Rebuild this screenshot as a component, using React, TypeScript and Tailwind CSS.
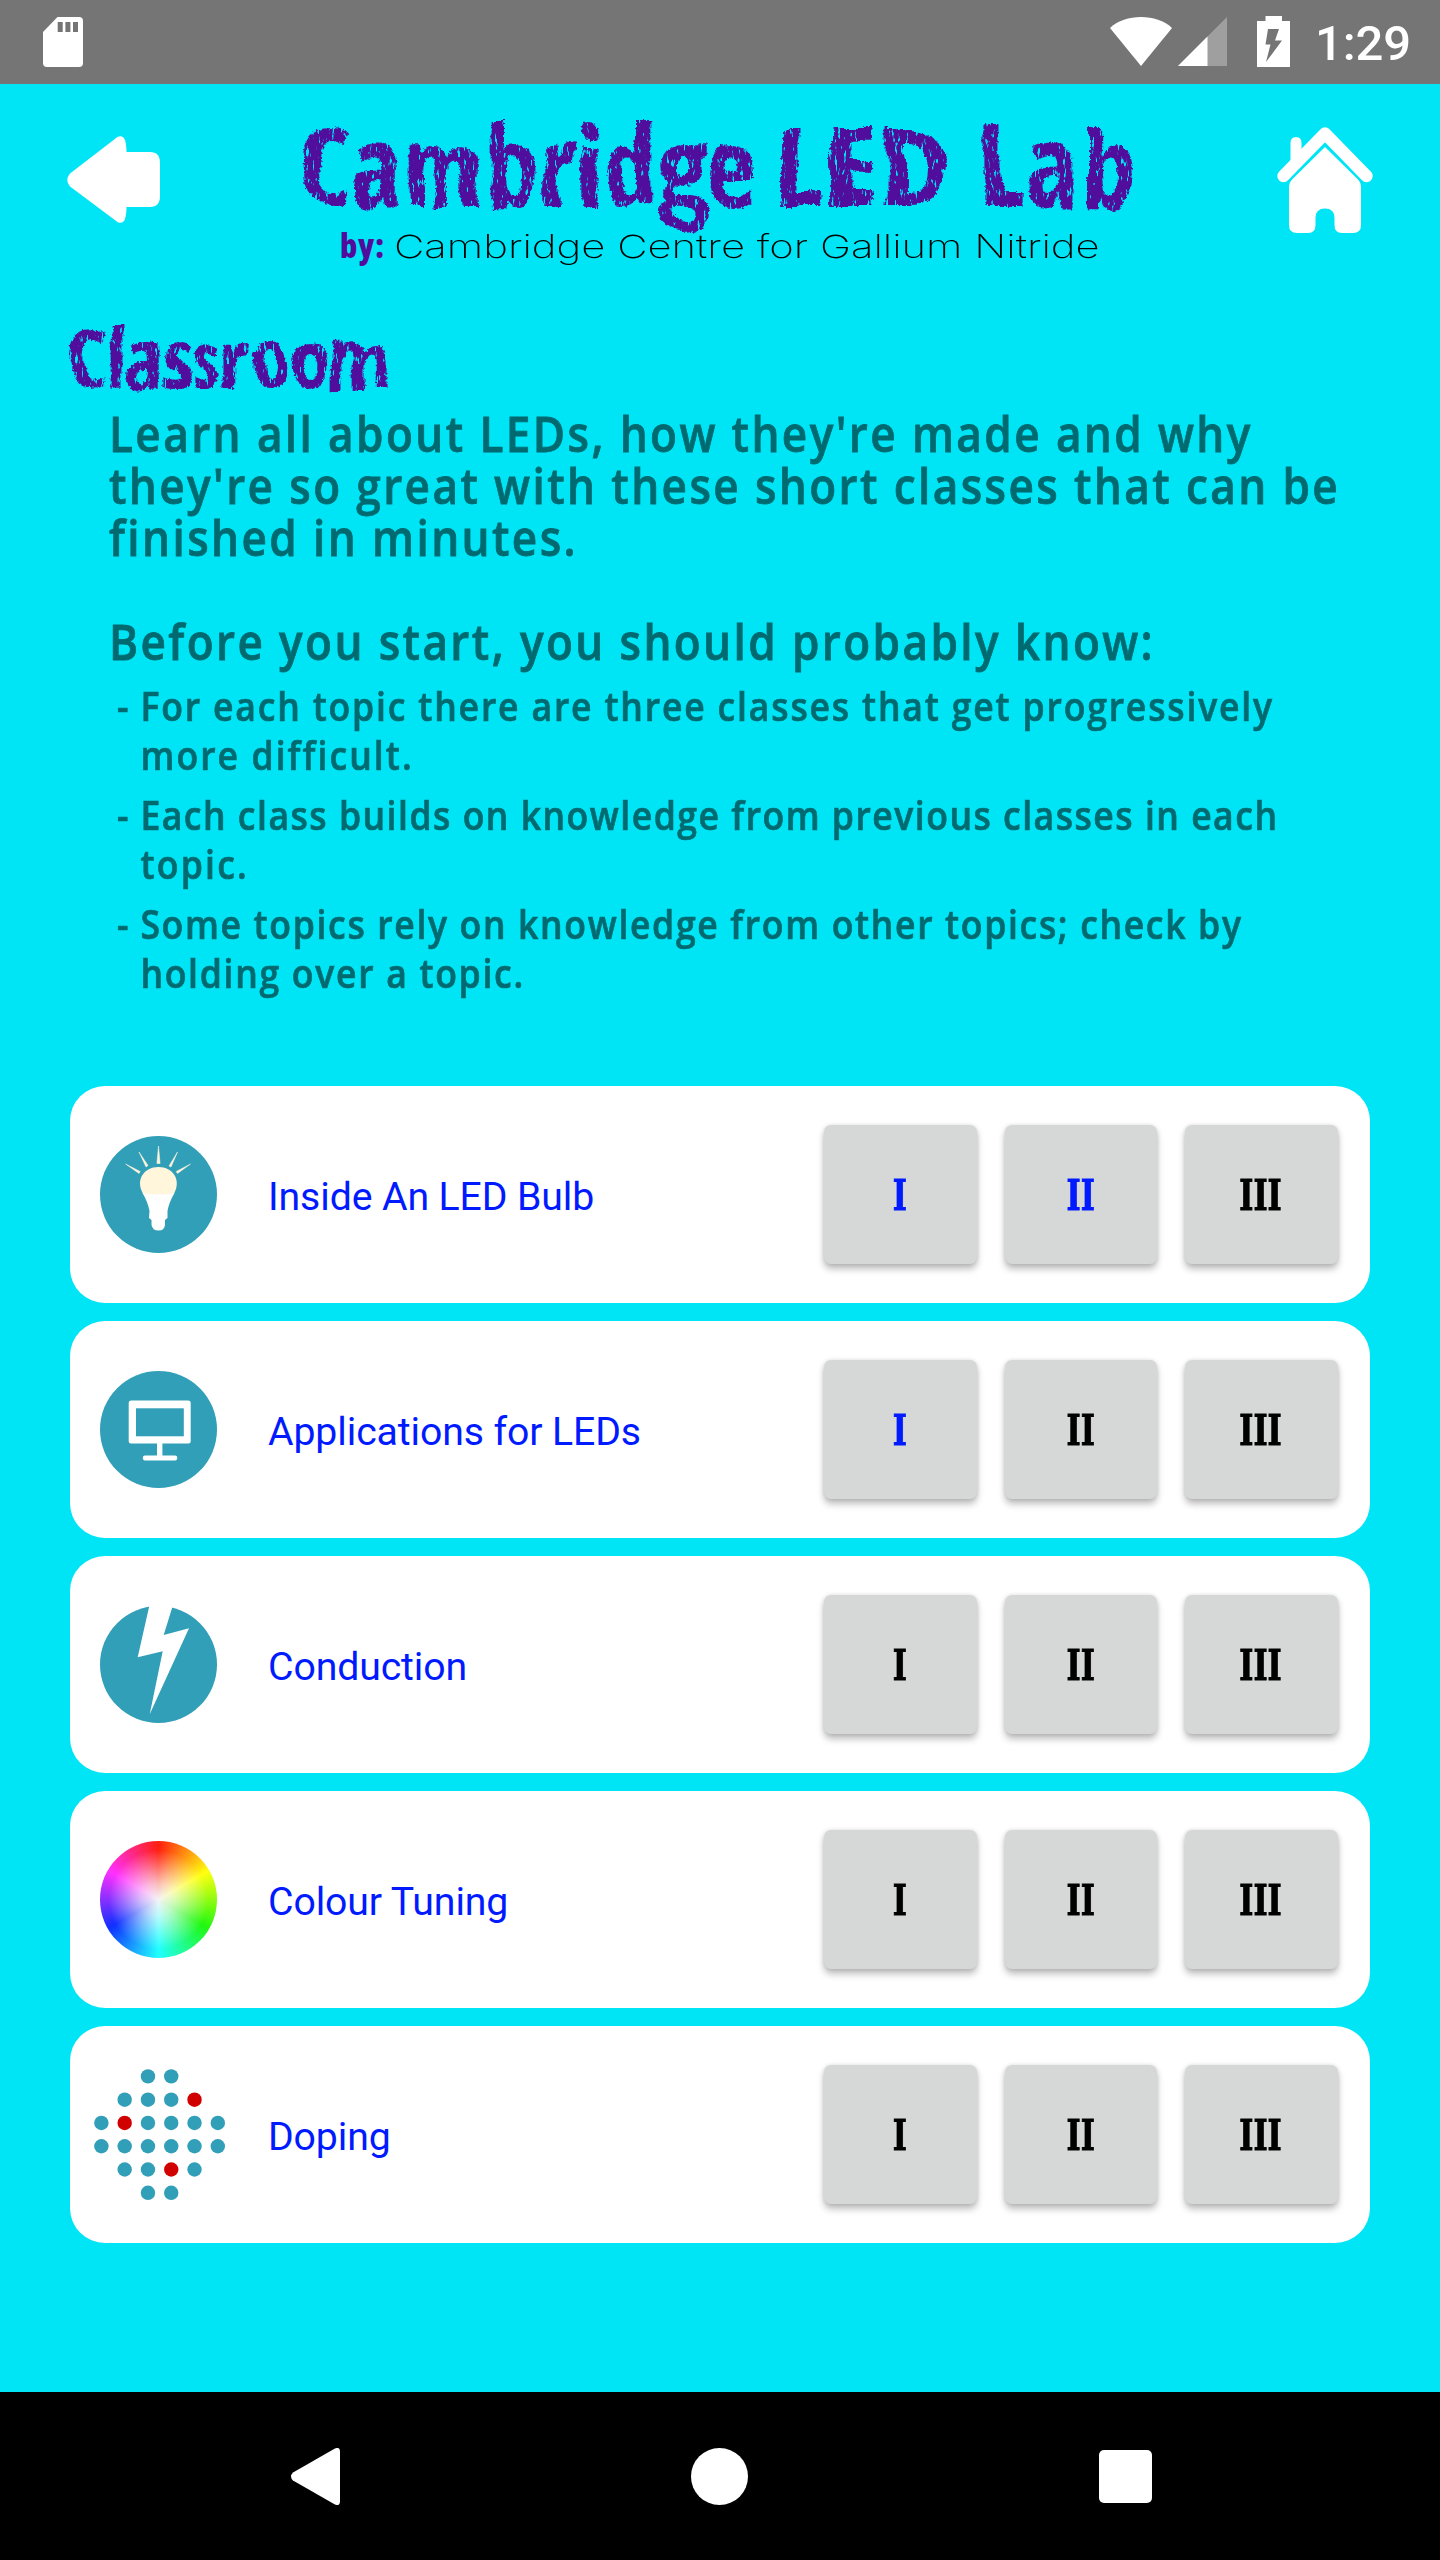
import React from "react";

const TEAL = "#319fb7";

/* ---------- status bar ---------- */

function StatusBar() {
  return (
    <div className="flex h-[84px] shrink-0 items-start bg-[#757575] pl-[43px] pr-[29px]">
      <svg className="mt-[17px] h-[50px] w-[40px]" viewBox="0 0 40 50">
        <path d="M14.5 0H36a4 4 0 0 1 4 4v42a4 4 0 0 1-4 4H4a4 4 0 0 1-4-4V15Z" fill="#fff" />
        <path d="M14.7 5h5v10h-5zM22.4 5h5v10h-5zM30 5h5v10h-5z" fill="#757575" />
      </svg>
      <svg className="ml-auto mt-[17px] h-[49px] w-[62px]" viewBox="0 0 62 49">
        <path d="M31 49 0 11C8 3.500 19 0 31 0s23 3.500 31 11Z" fill="#fff" />
      </svg>
      <svg className="ml-[6px] mt-[17px] h-[49px] w-[49px]" viewBox="0 0 49 49">
        <path d="M0 49 49 0v49Z" fill="#9f9f9f" />
        <path d="M0 49 29.500 19.500V49Z" fill="#fff" />
      </svg>
      <svg className="ml-[30px] mt-[16px] h-[51px] w-[33px]" viewBox="0 0 33 51">
        <path d="M8.500 0h16.500v5h8v46H0V5h8.500Z" fill="#fff" />
        <path d="M11 13h11l-4 11.500h7L9 46l4.500-17.500H8.500Z" fill="#757575" />
      </svg>
      <span className="ml-[25px] mt-[14px] w-[96px] whitespace-nowrap font-[Roboto] text-[49px] font-medium leading-[60px] tracking-[-0.100px] text-white">
        1:29
      </span>
    </div>
  );
}

/* ---------- header ---------- */

function BrushFilter() {
  return (
    <svg className="absolute h-0 w-0" aria-hidden="true">
      <filter id="brush" x="-5%" y="-5%" width="110%" height="110%">
        <feTurbulence type="fractalNoise" baseFrequency="0.022" numOctaves="2" seed="4" result="wobble" />
        <feDisplacementMap in="SourceGraphic" in2="wobble" scale="16" xChannelSelector="R" yChannelSelector="G" result="bent" />
        <feTurbulence type="fractalNoise" baseFrequency="0.4" numOctaves="1" seed="2" result="fine" />
        <feDisplacementMap in="bent" in2="fine" scale="4" xChannelSelector="R" yChannelSelector="G" result="rough" />
        <feTurbulence type="fractalNoise" baseFrequency="0.35 0.1" numOctaves="3" seed="9" result="grain" />
        <feColorMatrix in="grain" type="matrix" values="0 0 0 0 0  0 0 0 0 0  0 0 0 0 0  0 0 0 -10 7.400" result="mask" />
        <feComposite in="rough" in2="mask" operator="in" />
      </filter>
    </svg>
  );
}

function Header() {
  return (
    <header className="flex h-[231px] shrink-0 items-start pl-[67px] pr-[67px]">
      <svg className="mt-[52px] h-[88px] w-[93px]" viewBox="0 0 93 88">
        <path
          d="M48.500 2.500C52-1 56.500-.5 58 4c1 3.500 1.500 7.500 1.500 12H83q10 0 10 11v33q0 11-10 11H59.500c0 4.500-.5 8.500-1.500 12-1.500 4.500-6 5-9.500 1.500L3 50.500q-5.500-6.500 0-13Z"
          fill="#fff"
        />
      </svg>
      <div className="ml-[138px] mt-[24px] w-[850px]">
        <h1 className="flex whitespace-nowrap font-['Open_Sans'] text-[110px] font-bold leading-[110px] text-[#510c9c] font-stretch-75% [filter:url(#brush)]">
          <span className="w-[474px] shrink-0 tracking-[-0.300px]">Cambridge</span>
          <span className="w-[205px] shrink-0 origin-left scale-x-[1.15] tracking-[0.500px]">LED</span>
          <span className="origin-left scale-x-[1.06] tracking-[0.500px]">Lab</span>
        </h1>
        <div className="mt-[8px] flex items-baseline whitespace-nowrap pl-[42px] leading-[40px]">
          <span className="w-[54px] font-['Open_Sans'] text-[33px] font-extrabold tracking-[0.8px] text-[#510c9c] font-stretch-75%">by:</span>
          <span className="w-[705px] origin-left scale-x-[1.307] font-[Inter] text-[32px] font-extralight text-black">
            Cambridge Centre for Gallium Nitride
          </span>
        </div>
      </div>
      <svg className="ml-auto mt-[43px] h-[107px] w-[96px]" viewBox="0 0 96 107">
        <path d="M6.500 49 48 6.500 89.500 49" fill="none" stroke="#fff" strokeWidth="12.500" strokeLinecap="round" strokeLinejoin="round" />
        <path d="M13.500 40V16q0-6 5.500-6t5.500 6v16Z" fill="#fff" />
        <path
          d="M48 20 81.500 53Q84 56 84 59.500V98q0 8-8 8h-11q-7.500 0-7.500-8v-7q0-9.500-9.500-9.500T38.500 91v7q0 8-7.500 8H20q-8 0-8-8V59.500q0-3.500 2.500-6.500Z"
          fill="#fff"
        />
      </svg>
    </header>
  );
}

/* ---------- introduction ---------- */

function Intro() {
  return (
    <>
      <h2 className="-ml-[3px] whitespace-nowrap font-['Open_Sans'] text-[83px] font-bold leading-[83px] tracking-[-1.2px] text-[#510c9c] font-stretch-75% [filter:url(#brush)]">
        Classroom
      </h2>
      <div className="ml-[39px] mt-[9px] w-[1330px] origin-left scale-x-90 whitespace-nowrap font-['Open_Sans'] text-[49px] font-semibold leading-[52px] tracking-[2.67px] text-[#006a70] [-webkit-text-stroke:0.8px_currentColor]">
        <p>Learn all about LEDs, how they're made and why</p>
        <p>they're so great with these short classes that can be</p>
        <p>finished in minutes.</p>
        <p className="mt-[52px]">Before you start, you should probably know:</p>
      </div>
      <ul className="ml-[47px] mt-[15px] flex w-[1320px] origin-left scale-x-90 flex-col gap-[11px] whitespace-nowrap font-['Open_Sans'] text-[39.500px] font-semibold leading-[49px] text-[#006a70] [-webkit-text-stroke:0.700px_currentColor]">
        <li className="flex">
          <span className="w-[26px] shrink-0">-</span>
          <div>
            <p className="tracking-[2.03px]">For each topic there are three classes that get progressively</p>
            <p className="tracking-[2.3px]">more difficult.</p>
          </div>
        </li>
        <li className="flex">
          <span className="w-[26px] shrink-0">-</span>
          <div>
            <p className="tracking-[1.670px]">Each class builds on knowledge from previous classes in each</p>
            <p className="tracking-[2.5px]">topic.</p>
          </div>
        </li>
        <li className="flex">
          <span className="w-[26px] shrink-0">-</span>
          <div>
            <p className="tracking-[1.85px]">Some topics rely on knowledge from other topics; check by</p>
            <p className="tracking-[1.9px]">holding over a topic.</p>
          </div>
        </li>
      </ul>
    </>
  );
}

/* ---------- topic icons ---------- */

function BulbIcon() {
  return (
    <g transform="translate(6 7)">
      <circle cx="58.500" cy="58.500" r="58.500" fill={TEAL} />
      <path
        d="M42.500 57c3.500 6 6 12 7 18l-.5 7 2.500 2v5q1 5.500 7 5.500t6.500-5.500v-5l2.500-2 0-7c1-6 3.500-12 7-18Z"
        fill="#fff"
      />
      <path d="M43 57.500C35 44 44 31 58.500 31S81.500 44 74 57.500q-15.500 2-31 0Z" fill="#fff6dc" />
      <path
        d="M58.500 10l1.600 17.500h-3.200ZM39 16l9 13.500-2 1.500ZM77.500 16l-6.500 15-2-1ZM25.600 28l14.600 7.500-1.200 2ZM90.500 28 77.500 37.500l-1.300-2Z"
        fill="#fff6dc"
        stroke="#fff6dc"
        strokeWidth="0.500"
      />
    </g>
  );
}

function MonitorIcon() {
  return (
    <g transform="translate(6 7)">
      <circle cx="58.500" cy="58.500" r="58.500" fill={TEAL} />
      <rect x="28.700" y="29.500" width="62" height="43" rx="2.500" fill="#fff" />
      <rect x="36" y="37.300" width="47.800" height="28" fill={TEAL} />
      <path d="M57 71h5.400v14H57z" fill="#fff" />
      <rect x="42.900" y="84.400" width="34.300" height="5" rx="2" fill="#fff" />
    </g>
  );
}

function BoltIcon() {
  return (
    <g transform="translate(6 7)">
      <circle cx="58.500" cy="58.500" r="58.500" fill={TEAL} />
      <path d="M49.500-1 37.700 51.300 62.700 45.300 49.700 108.300 89 22.300 63.700 29 73-1Z" fill="#fff" />
    </g>
  );
}

const lattice: [number, number[]][] = [
  [0, [2, 3]],
  [1, [1, 2, 3, 4]],
  [2, [0, 1, 2, 3, 4, 5]],
  [3, [0, 1, 2, 3, 4, 5]],
  [4, [1, 2, 3, 4]],
  [5, [2, 3]],
];
const dopants = ["1-4", "2-1", "4-3"];

function LatticeIcon() {
  return (
    <g>
      {lattice.map(([row, cols]) =>
        cols.map((col) => (
          <circle
            key={`${row}-${col}`}
            cx={7.4 + col * 23.28}
            cy={7.4 + row * 23.28}
            r="7.200"
            fill={dopants.includes(`${row}-${col}`) ? "#d10000" : TEAL}
          />
        )),
      )}
    </g>
  );
}

function ColourWheel() {
  return (
    <div className="flex h-[131px] w-[131px] pl-[6px] pt-[7px]">
      <div className="h-[117px] w-[117px] rounded-full bg-[radial-gradient(circle_closest-side,#f4f4f4_0%,rgba(250,250,250,0.7)_28%,rgba(255,255,255,0.2)_68%,rgba(255,255,255,0)_85%),conic-gradient(#ff2010,#ffff10_60deg,#20f810_120deg,#20ffff_180deg,#1030ff_240deg,#ff30ff_300deg,#ff2010)]" />
    </div>
  );
}

/* ---------- topic list ---------- */

type Topic = { title: string; unlocked: number; icon: React.ReactNode };

const topics: Topic[] = [
  { title: "Inside An LED Bulb", unlocked: 2, icon: <BulbIcon /> },
  { title: "Applications for LEDs", unlocked: 1, icon: <MonitorIcon /> },
  { title: "Conduction", unlocked: 0, icon: <BoltIcon /> },
  { title: "Colour Tuning", unlocked: 0, icon: null },
  { title: "Doping", unlocked: 0, icon: <LatticeIcon /> },
];

function TopicCard({ title, unlocked, icon }: Topic) {
  return (
    <div className="flex h-[217px] items-center rounded-[35px] bg-white pl-[24px] pr-[32px]">
      {icon ? (
        <svg className="h-[131px] w-[131px]" viewBox="0 0 131 131">
          {icon}
        </svg>
      ) : (
        <ColourWheel />
      )}
      <span className="ml-[43px] mt-[4px] flex-1 whitespace-nowrap font-[Roboto] text-[39.200px] leading-[46px] tracking-[-0.100px] text-[#001aff]">
        {title}
      </span>
      <div className="flex gap-[28px]">
        {["I", "II", "III"].map((label, i) => (
          <button
            key={label}
            className={`flex h-[139px] w-[152.600px] items-center justify-center rounded-[7px] bg-[#d6d8d7] pr-[1.500px] shadow-[0_5px_7px_rgba(0,0,0,0.26),0_0_4px_rgba(0,0,0,0.12)] ${
              i < unlocked ? "text-[#001aff]" : "text-black"
            }`}
          >
            <span className="mt-[2px] inline-block scale-x-[0.8] font-['DejaVu_Serif_Condensed','DejaVu_Serif'] text-[42px] font-bold leading-[50px] [-webkit-text-stroke:0.900px_currentColor]">
              {label}
            </span>
          </button>
        ))}
      </div>
    </div>
  );
}

/* ---------- navigation bar ---------- */

function NavBar() {
  return (
    <div className="mt-auto flex h-[168px] shrink-0 items-center justify-between bg-black pl-[291px] pr-[288px]">
      <svg className="h-[57px] w-[49px]" viewBox="0 0 49 57">
        <path d="M43.500.8Q49-2 49 4v49q0 6-5.500 3.200L2 32.500q-4-4 0-8Z" fill="#fff" />
      </svg>
      <div className="h-[57px] w-[57px] rounded-full bg-white" />
      <div className="h-[53px] w-[53px] rounded-[5px] bg-white" />
    </div>
  );
}

export default function App() {
  return (
    <div className="flex h-[2560px] w-[1440px] flex-col overflow-hidden bg-[#00e5f6]">
      <BrushFilter />
      <StatusBar />
      <Header />
      <main className="px-[70px]">
        <Intro />
        <div className="mt-[88px] flex flex-col gap-[18px]">
          {topics.map((t) => (
            <TopicCard key={t.title} {...t} />
          ))}
        </div>
      </main>
      <NavBar />
    </div>
  );
}
